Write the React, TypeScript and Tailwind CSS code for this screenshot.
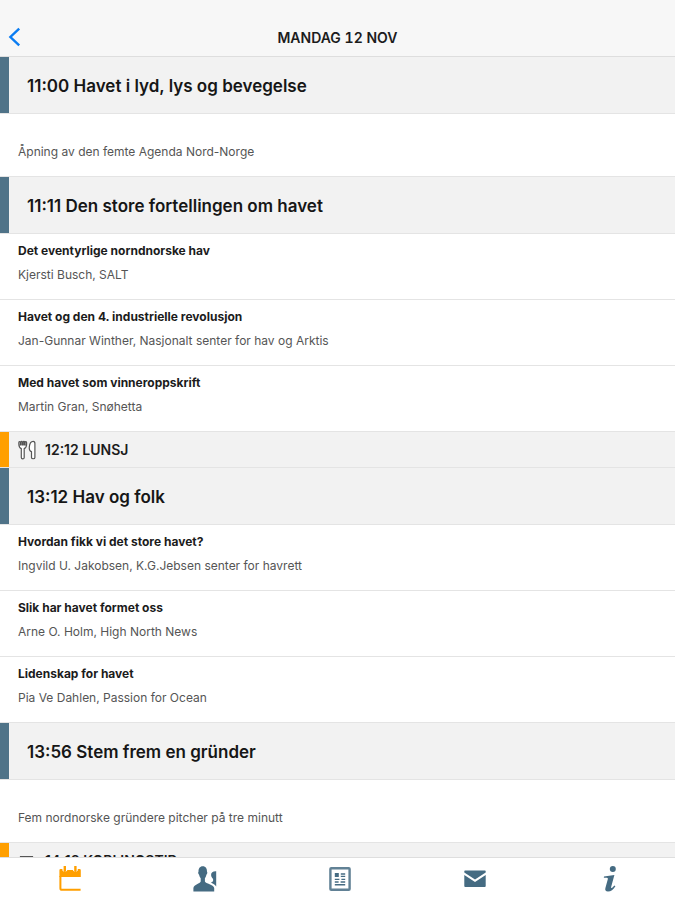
import type { ReactNode } from "react";

interface Talk {
  title: string;
  speaker: string;
}

interface Session {
  kind: "session";
  time: string;
  title: string;
  description?: string;
  talks?: Talk[];
}

interface Break {
  kind: "break";
  time: string;
  title: string;
  icon: ReactNode;
}

interface Tab {
  label: string;
  icon: ReactNode;
  active?: boolean;
}

const CutleryIcon = () => (
  <svg viewBox="0 0 18 20" className="h-5 w-[18px]" fill="#fff" stroke="#555" strokeWidth="1.2" strokeLinejoin="round" aria-hidden="true">
    <path d="M0.9 2.2C0.5 6 1.2 7.6 3.3 8.6V17.6C3.3 19.4 6.2 19.4 6.2 17.6V8.6C8.3 7.6 9 6 8.5 2.2C8.2 1.3 7.2 1.3 7.1 2.2V5H6.6V2.2C6.4 1.2 5.4 1.2 5.3 2.2V5H4.4V2.2C4.2 1.2 3.2 1.2 3 2.2V5H2.4V2.2C2.2 1.3 1.1 1.3 0.9 2.2Z" />
    <path d="M16.9 3.4V17.4C16.9 19.2 13.5 19.2 13.5 17.4V11.6C11.5 11.2 11.1 9.6 11.3 7C11.6 3.6 13 1.3 15.2 1.3C16.3 1.3 16.9 2.1 16.9 3.4Z" />
  </svg>
);

const CupIcon = () => (
  <svg viewBox="0 0 18 20" className="h-5 w-[18px]" fill="none" stroke="#555" strokeWidth="1.2" aria-hidden="true">
    <path d="M2.5 5.5H14.5V13C14.5 15.5 13 17 10.5 17H6.5C4 17 2.5 15.5 2.5 13ZM14.5 7H16.5V12H14.5" />
  </svg>
);

const CalendarIcon = () => (
  <svg viewBox="0 0 22 26" className="h-[26px] w-[22px]" fill="none" stroke="currentColor" aria-hidden="true">
    <path d="M0.4 11V4.2Q0.4 3 1.6 3H3.4V4.6Q5.8 7.4 8.2 4.6V4H14V4.6Q16.4 7.4 18.8 4.6V3H20.6Q21.8 3 21.8 4.2V11Z" fill="currentColor" stroke="none" />
    <path d="M5.8 0.4V4.8M16.4 0.4V4.8" strokeWidth="2.4" strokeLinecap="round" />
    <path d="M1.4 10V22.2Q1.4 23.8 3 23.8H21.6" strokeWidth="2" />
  </svg>
);

const PeopleIcon = () => (
  <svg viewBox="0 0 24 26" className="h-[26px] w-6" fill="currentColor" aria-hidden="true">
    <path d="M9.8 0.2C12.8 0.2 14.1 2.6 14 5.8C14.6 6.2 14.3 8.2 13.4 8.8C13.1 10.4 12.6 11.4 11.9 12.2V15.4C12.6 17.8 20.6 18 21.2 22V25.4H0.4V22C1 18 7 17.8 7.7 15.4V12.2C7 11.4 6.4 10.4 6.1 8.8C5.2 8.2 4.9 6.2 5.5 5.8C5.4 2.6 6.7 0.2 9.8 0.2Z" />
    <path d="M23.2 5.2V20.4C21.8 18.4 19.4 17.4 17.8 16.6C19.2 16.2 20 15.6 20.1 14.8V13C18.8 12 18.1 10.4 18.1 8.8C18.1 6.4 20 5 23.2 5.2Z" />
  </svg>
);

const NewsIcon = () => (
  <svg viewBox="0 0 22 24" className="h-6 w-[22px]" fill="none" stroke="currentColor" aria-hidden="true">
    <rect x="1.4" y="1.3" width="19.2" height="21.4" rx="0.8" strokeWidth="2.4" className="opacity-85" />
    <rect x="5.8" y="6" width="4" height="4" fill="currentColor" stroke="none" />
    <path d="M11.8 7H16.2M11.8 9.4H16.2M5.8 12.4H10.4M12.4 12.4H16.2M5.8 15H9.6M11.6 15H16.2M5.8 17.8H16.2" strokeWidth="1.4" />
  </svg>
);

const MailIcon = () => (
  <svg viewBox="0 0 22 18" className="h-[18px] w-[22px]" fill="currentColor" aria-hidden="true">
    <path d="M1 0.5H21Q21.7 0.5 21.7 1.4V2.6L11 9.4L0.3 2.6V1.4Q0.3 0.5 1 0.5Z" />
    <path d="M0.3 5L11 12L21.7 5V16Q21.7 17 20.8 17H1.2Q0.3 17 0.3 16Z" />
  </svg>
);

const InfoIcon = () => (
  <svg viewBox="0 0 14 26" className="h-[26px] w-3.5" fill="currentColor" aria-hidden="true">
    <circle cx="9.8" cy="3" r="3" />
    <path d="M1 10.4L11.4 9L8.2 20.8C7.9 22 8.5 22.3 9.2 21.8L11.4 19.4L12.4 20.2C10.4 23.8 7.8 25.6 5 25.6C2.6 25.6 1.8 24.2 2.4 22L4.8 13.2C5.1 12 4.6 11.6 0.8 11.8Z" />
  </svg>
);

const program: (Session | Break)[] = [
  {
    kind: "session",
    time: "11:00",
    title: "Havet i lyd, lys og bevegelse",
    description: "Åpning av den femte Agenda Nord-Norge",
  },
  {
    kind: "session",
    time: "11:11",
    title: "Den store fortellingen om havet",
    talks: [
      { title: "Det eventyrlige norndnorske hav", speaker: "Kjersti Busch, SALT" },
      { title: "Havet og den 4. industrielle revolusjon", speaker: "Jan-Gunnar Winther, Nasjonalt senter for hav og Arktis" },
      { title: "Med havet som vinneroppskrift", speaker: "Martin Gran, Snøhetta" },
    ],
  },
  { kind: "break", time: "12:12", title: "LUNSJ", icon: <CutleryIcon /> },
  {
    kind: "session",
    time: "13:12",
    title: "Hav og folk",
    talks: [
      { title: "Hvordan fikk vi det store havet?", speaker: "Ingvild U. Jakobsen, K.G.Jebsen senter for havrett" },
      { title: "Slik har havet formet oss", speaker: "Arne O. Holm, High North News" },
      { title: "Lidenskap for havet", speaker: "Pia Ve Dahlen, Passion for Ocean" },
    ],
  },
  {
    kind: "session",
    time: "13:56",
    title: "Stem frem en gründer",
    description: "Fem nordnorske gründere pitcher på tre minutt",
  },
  { kind: "break", time: "14:18", title: "KOBLINGSTID", icon: <CupIcon /> },
];

const tabs: Tab[] = [
  { label: "Program", icon: <CalendarIcon />, active: true },
  { label: "Deltakere", icon: <PeopleIcon /> },
  { label: "Nyheter", icon: <NewsIcon /> },
  { label: "Meldinger", icon: <MailIcon /> },
  { label: "Info", icon: <InfoIcon /> },
];

function SessionBlock({ session }: { session: Session }) {
  return (
    <section>
      <h2 className="border-b border-[#e4e4e4] bg-[#f2f2f2] text-[17px] leading-6 font-semibold text-[#161616]">
        <span className="block border-l-[9px] border-[#4f7388] pt-[17px] pb-[15px] pl-[18px]">
          {session.time} {session.title}
        </span>
      </h2>
      {session.description && (
        <p className="border-b border-[#e4e4e4] px-[18px] pt-[29px] pb-[15px] text-[12px] leading-[18px] text-[#555]">
          {session.description}
        </p>
      )}
      {session.talks && (
        <ul>
          {session.talks.map((talk) => (
            <li key={talk.title} className="border-b border-[#e4e4e4] px-[18px] pt-2 pb-[15px]">
              <h3 className="text-[12px] leading-[18px] font-bold text-[#1c1c1c]">{talk.title}</h3>
              <p className="mt-1.5 text-[12px] leading-[18px] text-[#555]">{talk.speaker}</p>
            </li>
          ))}
        </ul>
      )}
    </section>
  );
}

function BreakRow({ item }: { item: Break }) {
  return (
    <h2 className="border-b border-[#e4e4e4] bg-[#f2f2f2] text-[14px] leading-5 font-semibold text-[#1c1c1c]">
      <span className="flex items-center gap-[9px] border-l-[9px] border-[#ff9f00] pt-2 pb-[7px] pl-[9px]">
        {item.icon}
        {item.time} {item.title}
      </span>
    </h2>
  );
}

export default function App() {
  return (
    <div className="flex h-screen flex-col bg-white font-[Inter,'Liberation_Sans',sans-serif]">
      <header className="grid shrink-0 grid-cols-[1fr_auto_1fr] items-center border-b border-[#dedede] bg-[#f7f7f7] pt-[19px] pb-px">
        <button type="button" aria-label="Tilbake" className="flex h-9 w-9 items-center pl-2 text-[#0b7df2]">
          <svg viewBox="0 0 13 20" className="h-5 w-[13px]" fill="none" stroke="currentColor" strokeWidth="2.4" aria-hidden="true">
            <path d="M11.2 1.6L2.4 10L11.2 18.4" />
          </svg>
        </button>
        <h1 className="text-[14px] font-semibold text-[#1c1c1c] tabular-nums">MANDAG 12 NOV</h1>
      </header>

      <main className="min-h-0 flex-1 overflow-y-auto [scrollbar-width:none]">
        {program.map((entry) =>
          entry.kind === "session" ? (
            <SessionBlock key={entry.time} session={entry} />
          ) : (
            <BreakRow key={entry.time} item={entry} />
          )
        )}
      </main>

      <nav className="grid shrink-0 grid-cols-5 border-t border-[#dedede] bg-white">
        {tabs.map((tab) => (
          <button
            key={tab.label}
            type="button"
            aria-label={tab.label}
            className={`flex h-[42px] items-center justify-center pl-1 ${tab.active ? "text-[#ff9f00]" : "text-[#456b82]"}`}
          >
            {tab.icon}
          </button>
        ))}
      </nav>
    </div>
  );
}
